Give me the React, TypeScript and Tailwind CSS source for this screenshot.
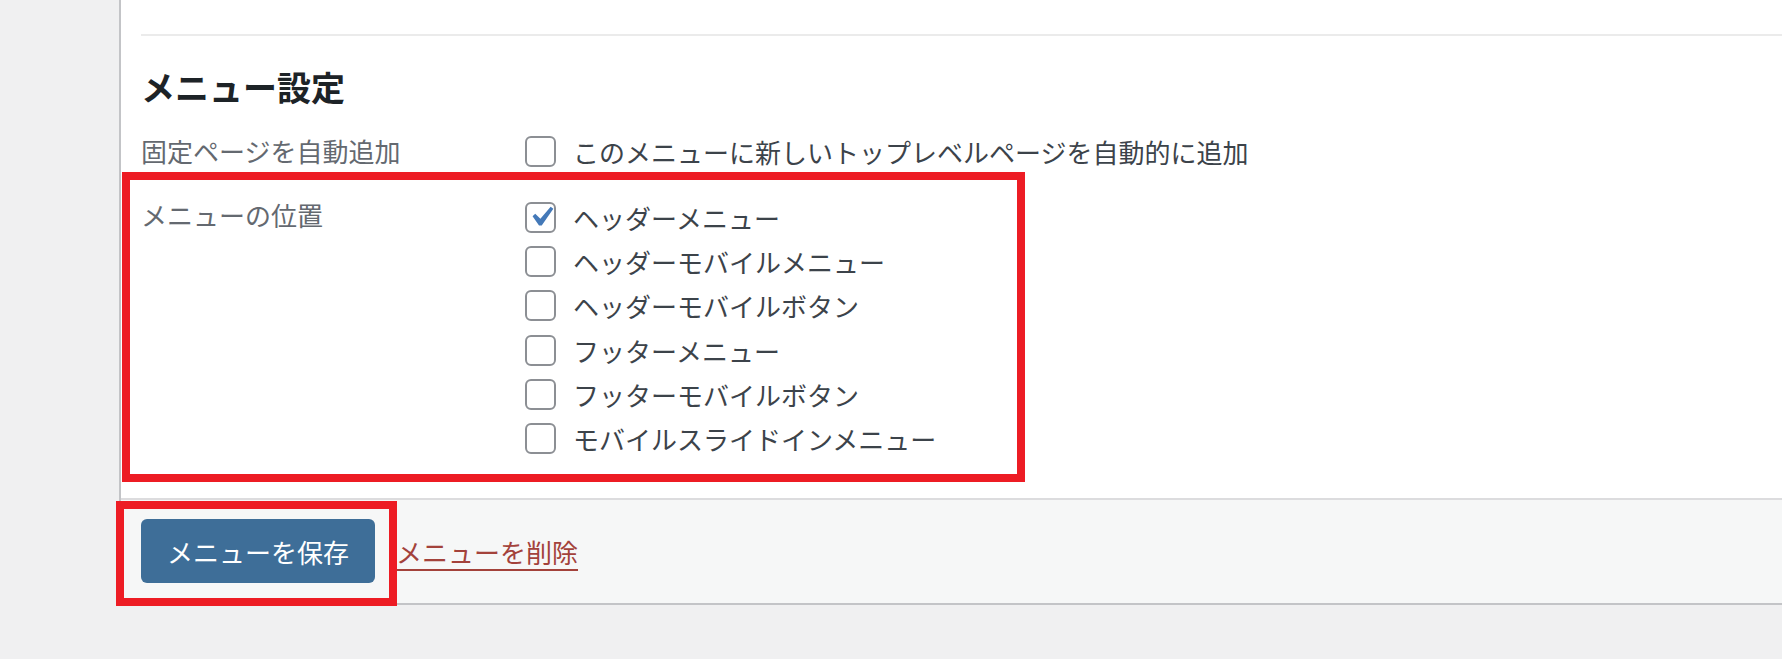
import React from "react";

function Box({ checked = false }: { checked?: boolean }) {
  return (
    <span className="relative inline-block w-[31px] h-[31px] shrink-0 rounded-[6px] border-2 border-[#8c8f94] bg-white">
      {checked && (
        <svg
          viewBox="0 0 20 20"
          className="absolute left-[-6.5px] top-[-6.5px] w-[40px] h-[40px]"
        >
          <path
            d="M14.83 4.89l1.34.94-5.81 8.38H9.02L5.78 9.67l1.34-1.25 2.57 2.4z"
            fill="#4479b8"
          />
        </svg>
      )}
    </span>
  );
}

const locations = [
  { label: "ヘッダーメニュー", checked: true },
  { label: "ヘッダーモバイルメニュー", checked: false },
  { label: "ヘッダーモバイルボタン", checked: false },
  { label: "フッターメニュー", checked: false },
  { label: "フッターモバイルボタン", checked: false },
  { label: "モバイルスライドインメニュー", checked: false },
];

export default function App() {
  return (
    <div className="relative w-full h-[659px] overflow-hidden bg-[#f0f0f1] font-['Noto_Sans_CJK_JP',sans-serif]">
      <div className="ml-[119px] border-l-2 border-[#c3c4c7] bg-white">
        <div className="pl-[20px] pt-[34px] pb-[37px]">
          <div className="h-[2px] bg-[#ebebeb]" />
          <h3 className="mt-[31px] text-[34px] leading-[40px] font-bold text-[#1d2327]">
            メニュー設定
          </h3>
          <div className="mt-[22px] flex">
            <div className="w-[384px] text-[26px] leading-[44px] text-[#646970]">
              固定ページを自動追加
            </div>
            <label className="flex h-[44px] items-center gap-[17px] text-[26px] text-[#3c434a]">
              <Box />
              <span>このメニューに新しいトップレベルページを自動的に追加</span>
            </label>
          </div>
          <div className="mt-[22px] flex">
            <div className="w-[384px] text-[26px] leading-[40px] text-[#646970]">
              メニューの位置
            </div>
            <div className="flex flex-col">
              {locations.map((l) => (
                <label
                  key={l.label}
                  className="flex h-[44.3px] items-center gap-[17px] text-[26px] text-[#3c434a]"
                >
                  <Box checked={l.checked} />
                  <span>{l.label}</span>
                </label>
              ))}
            </div>
          </div>
        </div>
        <div className="flex h-[107px] items-center gap-[21px] border-t-2 border-b-2 border-t-[#dcdcde] border-b-[#c3c4c7] bg-[#f6f7f7] pl-[20px]">
          <button className="h-[64px] w-[234px] rounded-[6px] bg-[#3e6e98] text-[26px] text-white">
            メニューを保存
          </button>
          <a className="text-[26px] text-[#a3423b] underline decoration-2 underline-offset-[6px]">
            メニューを削除
          </a>
        </div>
      </div>

      <div className="pointer-events-none absolute left-[122px] top-[172px] h-[310px] w-[903px] border-[8px] border-[#ed1c24]" />
      <div className="pointer-events-none absolute left-[116px] top-[501px] h-[105px] w-[281px] border-[8px] border-[#ed1c24]" />
    </div>
  );
}
